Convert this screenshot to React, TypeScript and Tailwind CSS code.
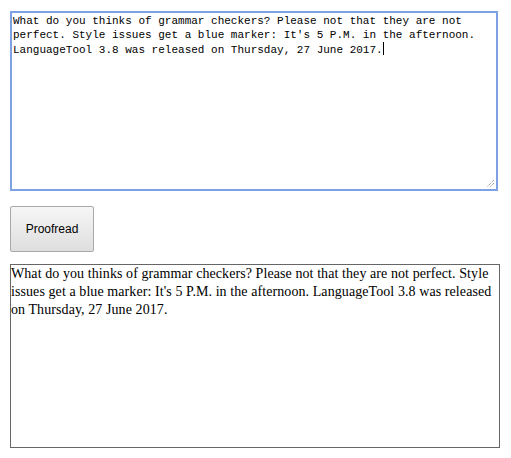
export default function App() {
  const text =
    "What do you thinks of grammar checkers? Please not that they are not perfect. Style issues get a blue marker: It's 5 P.M. in the afternoon. LanguageTool 3.8 was released on Thursday, 27 June 2017.";

  return (
    <div className="w-[511px] h-[458px] bg-white px-[10px] pt-[11px]">
      {/* editable area, drawn focused */}
      <div className="relative w-[488px] h-[180px] border-2 border-[#7ea1e3] px-[1px] pt-[1px] text-[11px] leading-[14px] text-black whitespace-pre-wrap" style={{ fontFamily: '"Liberation Mono", "DejaVu Sans Mono", monospace' }}>
        <div className="w-[470px]">
          {"What do you thinks of grammar checkers? Please not that they are not\nperfect. Style issues get a blue marker: It's 5 P.M. in the afternoon.\nLanguageTool 3.8 was released on Thursday, 27 June 2017."}
          <span className="inline-block w-[1px] h-[13px] bg-black align-[-2px]" />
        </div>
        <svg className="absolute right-[1px] bottom-[1px]" width="9" height="9" viewBox="0 0 9 9">
          <path d="M8 1 L1 8 M8 4 L4 8" stroke="#777" strokeWidth="1" strokeDasharray="1 1" />
        </svg>
      </div>

      <button
        className="mt-[15px] w-[84px] h-[46px] border border-[#a9a9a9] rounded-[2px] bg-gradient-to-b from-[#f6f6f6] to-[#dedede] text-[12px] text-black"
        style={{ fontFamily: '"Liberation Sans", Arial, sans-serif' }}
      >
        Proofread
      </button>

      <div
        className="mt-[12px] w-[490px] h-[184px] border border-[#666] text-[14px] tracking-[0.08px] leading-[18px] text-black"
        style={{ fontFamily: '"Liberation Serif", "Times New Roman", serif' }}
      >
        {text}
      </div>
    </div>
  );
}
